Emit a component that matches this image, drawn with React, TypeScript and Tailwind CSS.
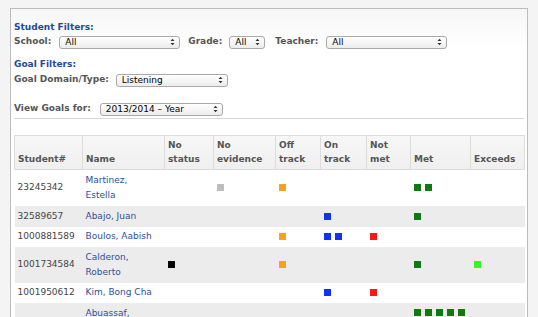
import React from "react";

type Mark = "gray" | "orange" | "blue" | "red" | "green" | "lime" | "black";

const MARK_COLORS: Record<Mark, string> = {
  gray: "bg-[#bdbdbd]",
  orange: "bg-[#f7a21b]",
  blue: "bg-[#1233f5]",
  red: "bg-[#f51a1a]",
  green: "bg-[#0f7a12]",
  lime: "bg-[#33f533]",
  black: "bg-[#050505]",
};

const COLUMNS = [
  { label: ["Student#"], w: "w-[68px]" },
  { label: ["Name"], w: "w-[82px]" },
  { label: ["No", "status"], w: "w-[49px]" },
  { label: ["No", "evidence"], w: "w-[62px]" },
  { label: ["Off", "track"], w: "w-[45px]" },
  { label: ["On", "track"], w: "w-[46px]" },
  { label: ["Not", "met"], w: "w-[44px]" },
  { label: ["Met"], w: "w-[60px]" },
  { label: ["Exceeds"], w: "w-[54px]" },
];

// marks per status column: noStatus, noEvidence, offTrack, onTrack, notMet, met, exceeds
const ROWS: { id: string; name: string[]; h: string; marks: Mark[][]; top?: boolean }[] = [
  { id: "23245342", name: ["Martinez,", "Estella"], h: "h-[36px]", marks: [[], ["gray"], ["orange"], [], [], ["green", "green"], []] },
  { id: "32589657", name: ["Abajo, Juan"], h: "h-[21px]", marks: [[], [], [], ["blue"], [], ["green"], []] },
  { id: "1000881589", name: ["Boulos, Aabish"], h: "h-[20px]", marks: [[], [], ["orange"], ["blue", "blue"], ["red"], [], []] },
  { id: "1001734584", name: ["Calderon,", "Roberto"], h: "h-[36px]", marks: [["black"], [], ["orange"], [], [], ["green"], ["lime"]] },
  { id: "1001950612", name: ["Kim, Bong Cha"], h: "h-[20px]", marks: [[], [], [], ["blue"], ["red"], [], []] },
  { id: "", name: ["Abuassaf,"], h: "h-[36px]", top: true, marks: [[], [], [], [], [], ["green", "green", "green", "green", "green"], []] },
];

function Select({ value, w }: { value: string; w: string }) {
  return (
    <div className={`${w} h-[13px] flex items-center justify-between rounded-[3px] border border-[#a9a9a9] bg-gradient-to-b from-white to-[#ececec] pl-[5px] pr-[4px] text-[9px] font-normal text-black leading-none`}>
      <span>{value}</span>
      <svg width="5" height="8" viewBox="0 0 5 8">
        <path d="M0.5 3 L2.5 0.8 L4.5 3 Z M0.5 5 L2.5 7.2 L4.5 5 Z" fill="#333" />
      </svg>
    </div>
  );
}

export default function App() {
  return (
    <div className="w-[538px] h-[317px] overflow-hidden bg-[#f4f4f4] pt-[8px] pl-[10px] pr-[10px] font-['DejaVu_Sans',Verdana,sans-serif]">
      <div className="h-full border border-b-0 border-[#bcbcbc] bg-gradient-to-b from-[#f6f6f6] to-white to-[40px] pl-[3px] pr-[3px]">
        {/* filters */}
        <div className="mt-[11px] h-[14px] leading-[14px] text-[9px] font-bold text-[#1f4a9b]">Student Filters:</div>
        <div className="mt-[1px] h-[14px] flex items-center text-[9px] font-bold text-[#555]">
          <span>School:</span>
          <div className="ml-[8px]"><Select value="All" w="w-[121px]" /></div>
          <span className="ml-[8px]">Grade:</span>
          <div className="ml-[7px]"><Select value="All" w="w-[36px]" /></div>
          <span className="ml-[10px]">Teacher:</span>
          <div className="ml-[8px]"><Select value="All" w="w-[121px]" /></div>
        </div>
        <div className="mt-[8px] h-[14px] leading-[14px] text-[9px] font-bold text-[#1f4a9b]">Goal Filters:</div>
        <div className="mt-[2px] h-[14px] flex items-center text-[9px] font-bold text-[#555]">
          <span>Goal Domain/Type:</span>
          <div className="ml-[7px]"><Select value="Listening" w="w-[112px]" /></div>
        </div>
        <div className="mt-[15px] h-[14px] flex items-center text-[9px] font-bold text-[#555]">
          <span>View Goals for:</span>
          <div className="ml-[9px]"><Select value="2013/2014 – Year" w="w-[123px]" /></div>
        </div>
        <div className="mt-[2px] w-[510px] border-t border-[#d6d6d6]" />

        {/* goals table */}
        <table className="mt-[16px] w-[510px] table-fixed border-collapse text-[9px]">
          <colgroup>
            {COLUMNS.map((c, i) => (
              <col key={i} className={c.w} />
            ))}
          </colgroup>
          <thead>
            <tr className="h-[34px] bg-gradient-to-b from-[#f7f7f7] to-[#efefef]">
              {COLUMNS.map((c, i) => (
                <th
                  key={i}
                  className="border border-[#dcdcdc] px-[3px] pt-0 pb-[3px] text-left align-bottom font-bold leading-[14px] text-[#555]"
                >
                  {c.label.map((l, j) => (
                    <div key={j}>{l}</div>
                  ))}
                </th>
              ))}
            </tr>
          </thead>
          <tbody>
            {ROWS.map((r, i) => (
              <tr key={i} className={`${r.h} ${i % 2 === 1 ? "bg-[#ececec]" : "bg-white"}`}>
                <td className={`px-[3px] py-0 leading-[15px] text-[#444] ${r.top ? "align-top pt-[3px]" : "align-middle"}`}>{r.id}</td>
                <td className={`px-[3px] py-0 leading-[15px] text-[#2c4f9e] ${r.top ? "align-top pt-[3px]" : "align-middle"}`}>
                  {r.name.map((n, j) => (
                    <div key={j}>{n}</div>
                  ))}
                </td>
                {r.marks.map((m, j) => (
                  <td key={j} className={`px-[3px] py-0 ${r.top ? "align-top pt-[6px]" : "align-middle"}`}>
                    <div className="flex gap-[4px]">
                      {m.map((c, k) => (
                        <div key={k} className={`w-[7px] h-[7px] ${MARK_COLORS[c]}`} />
                      ))}
                    </div>
                  </td>
                ))}
              </tr>
            ))}
          </tbody>
        </table>
      </div>
    </div>
  );
}
